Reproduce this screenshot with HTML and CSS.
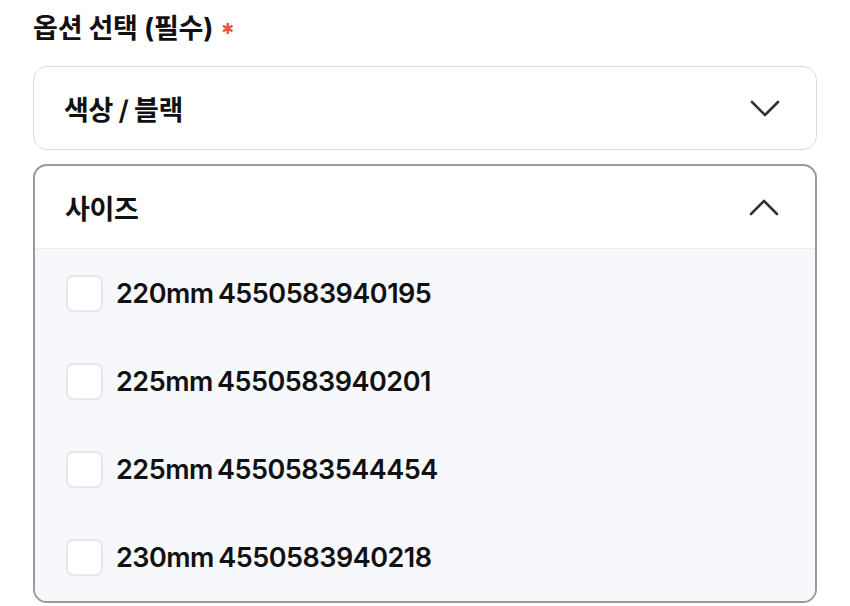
FILE: index.html
```html
<!DOCTYPE html>
<html lang="ko">
<head>
<meta charset="utf-8">
<link rel="stylesheet" href="styles.css">
</head>
<body>
<div class="wrap">
  <h2 class="title">옵션 선택 (필수) <span class="req">✱</span></h2>
  <div class="select">
    <div class="select-head">
      <span class="label">색상 / 블랙</span>
      <svg class="chev" width="30" height="17" viewBox="0 0 30 17"><path d="M2 2 L15 15 L28 2" fill="none" stroke="#333" stroke-width="2.6" stroke-linecap="round" stroke-linejoin="round"/></svg>
    </div>
  </div>
  <div class="select open">
    <div class="select-head">
      <span class="label">사이즈</span>
      <svg class="chev" width="30" height="17" viewBox="0 0 30 17"><path d="M2 15 L15 2 L28 15" fill="none" stroke="#333" stroke-width="2.6" stroke-linecap="round" stroke-linejoin="round"/></svg>
    </div>
    <ul class="list">
      <li class="item"><span class="box"></span><span class="opt">220mm 4550583940195</span></li>
      <li class="item"><span class="box"></span><span class="opt">225mm 4550583940201</span></li>
      <li class="item"><span class="box"></span><span class="opt">225mm 4550583544454</span></li>
      <li class="item"><span class="box"></span><span class="opt">230mm 4550583940218</span></li>
    </ul>
  </div>
</div>
</body>
</html>
```
FILE: styles.css
```css
* { box-sizing: border-box; }
html, body { margin: 0; padding: 0; background: #fff; }
body {
  font-family: Inter, "Noto Sans CJK KR", sans-serif;
  color: #111;
}
.wrap {
  padding: 10px 0 0 33px;
  width: 850px;
}
.title {
  margin: 0;
  font-size: 27px;
  font-weight: 700;
  line-height: 38px;
  height: 56px;
  letter-spacing: -0.2px;
}
.req {
  color: #e8553f;
  font-family: "DejaVu Sans", sans-serif;
  font-size: 15px;
  vertical-align: 4px;
  margin-left: 2px;
}
.select {
  width: 784px;
  border: 1.5px solid #dcdcdc;
  border-radius: 14px;
  background: #fff;
  margin-bottom: 14px;
  overflow: hidden;
}
.select.open {
  border: 2px solid #9a9a9a;
}
.select-head {
  height: 82px;
  display: flex;
  align-items: center;
  justify-content: space-between;
  padding: 0 36px 0 30px;
}
.select.open .select-head {
  height: 83px;
  border-bottom: 1px solid #ececf0;
}
.label {
  font-size: 27px;
  font-weight: 600;
  letter-spacing: -0.3px;
  word-spacing: -1px;
}
.chev { display: block; }
.list {
  list-style: none;
  margin: 0;
  padding: 0;
  background: #f7f8fc;
}
.item {
  height: 88px;
  display: flex;
  align-items: center;
  padding-left: 31px;
}
.box {
  width: 37px;
  height: 37px;
  border: 2px solid #e6e7ea;
  border-radius: 7px;
  background: #fff;
  margin-right: 13px;
  flex: none;
}
.opt {
  font-size: 27px;
  font-weight: 600;
  letter-spacing: -0.5px;
  word-spacing: -2px;
}
```
